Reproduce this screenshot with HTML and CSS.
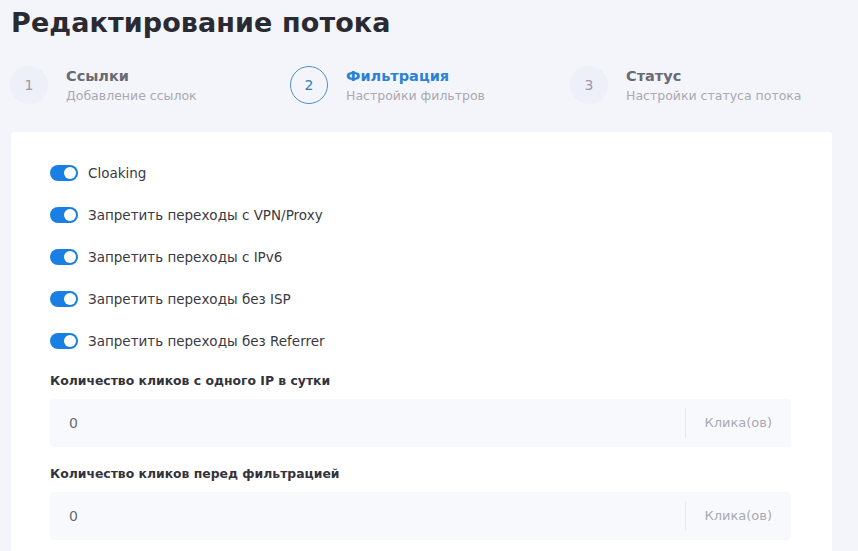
FILE: index.html
```html
<!DOCTYPE html>
<html lang="ru">
<head>
  <meta charset="UTF-8">
  <meta name="viewport" content="width=device-width, initial-scale=1.0">
  <title>Редактирование потока</title>
  <link rel="stylesheet" href="styles.css">
</head>
<body>
  <div class="page">
    <h1 class="page-title">Редактирование потока</h1>

    <div class="steps">
      <div class="step">
        <div class="step-num">1</div>
        <div class="step-text">
          <div class="step-title">Ссылки</div>
          <div class="step-sub">Добавление ссылок</div>
        </div>
      </div>
      <div class="step active">
        <div class="step-num">2</div>
        <div class="step-text">
          <div class="step-title">Фильтрация</div>
          <div class="step-sub">Настройки фильтров</div>
        </div>
      </div>
      <div class="step">
        <div class="step-num">3</div>
        <div class="step-text">
          <div class="step-title">Статус</div>
          <div class="step-sub">Настройки статуса потока</div>
        </div>
      </div>
    </div>

    <div class="card">
      <div class="switches">
        <label class="switch-row"><span class="switch on"></span>Cloaking</label>
        <label class="switch-row"><span class="switch on"></span>Запретить переходы с VPN/Proxy</label>
        <label class="switch-row"><span class="switch on"></span>Запретить переходы с IPv6</label>
        <label class="switch-row"><span class="switch on"></span>Запретить переходы без ISP</label>
        <label class="switch-row"><span class="switch on"></span>Запретить переходы без Referrer</label>
      </div>

      <div class="field">
        <div class="field-label">Количество кликов с одного IP в сутки</div>
        <div class="input-group">
          <input type="text" class="input" value="0">
          <span class="input-addon">Клика(ов)</span>
        </div>
      </div>

      <div class="field">
        <div class="field-label">Количество кликов перед фильтрацией</div>
        <div class="input-group">
          <input type="text" class="input" value="0">
          <span class="input-addon">Клика(ов)</span>
        </div>
      </div>
    </div>
  </div>
</body>
</html>
```

FILE: styles.css
```css
:root {
  --primary: #1a7fe3;
  --bg: #f4f5fa;
  --text: #2c2c36;
  --muted: #a3a3ad;
  --input-bg: #f8f9fc;
}

body {
  margin: 0;
  font-family: 'DejaVu Sans', 'Noto Sans', sans-serif;
  background-color: var(--bg);
  color: var(--text);
  overflow: hidden;
}

.page {
  padding: 6px 26px 0 11px;
  height: 551px;
  box-sizing: border-box;
  display: flex;
  flex-direction: column;
}

.page-title {
  margin: 0;
  font-size: 27px;
  font-weight: bold;
  letter-spacing: 0.1px;
  color: #2a2a33;
  line-height: 34px;
}

.steps {
  display: flex;
  margin-top: 25px;
  height: 67px;
  flex-shrink: 0;
}

.step {
  display: flex;
  align-items: center;
  width: 280px;
  height: 40px;
  flex-shrink: 0;
}

.step-num {
  width: 38px;
  height: 38px;
  border-radius: 50%;
  background-color: #edf0f8;
  color: #9a9aa4;
  font-size: 14px;
  display: flex;
  align-items: center;
  justify-content: center;
  margin-left: -1px;
  flex-shrink: 0;
}

.step-text {
  margin-left: 18px;
}

.step-title {
  font-size: 14.5px;
  font-weight: bold;
  color: #6a6a72;
  line-height: 20px;
}

.step-sub {
  font-size: 12.5px;
  color: #a9a9b1;
  line-height: 18px;
  margin-top: 1px;
}

.step.active .step-num {
  background-color: transparent;
  border: 1px solid #4d8fc9;
  color: #3a7cb8;
  box-sizing: border-box;
}

.step.active .step-title {
  color: #2a82d6;
}

.card {
  flex: 1;
  overflow: hidden;
  background-color: #fff;
  border-radius: 3px 3px 0 0;
  padding: 32px 41px 0 39px;
}

.switches {
  display: flex;
  flex-direction: column;
  gap: 24px;
}

.switch-row {
  display: flex;
  align-items: center;
  font-size: 13.5px;
  color: #3a3a42;
  line-height: 18px;
}

.switch {
  width: 28px;
  height: 16px;
  border-radius: 8px;
  background-color: #cfd3dc;
  position: relative;
  margin-right: 10px;
  flex-shrink: 0;
}

.switch::after {
  content: "";
  position: absolute;
  top: 2px;
  left: 2px;
  width: 12px;
  height: 12px;
  border-radius: 50%;
  background-color: #fff;
}

.switch.on {
  background-color: var(--primary);
}

.switch.on::after {
  left: 14px;
}

.field {
  margin-top: 22px;
}

.field + .field {
  margin-top: 18px;
}

.field-label {
  font-size: 12.4px;
  font-weight: bold;
  color: #33333b;
  line-height: 18px;
  margin-bottom: 9px;
}

.input-group {
  display: flex;
  align-items: center;
  background-color: var(--input-bg);
  border-radius: 4px;
  height: 48px;
}

.input {
  flex: 1;
  border: none;
  background: transparent;
  font-family: inherit;
  font-size: 14px;
  color: #6a6a72;
  padding: 0 19px;
  height: 100%;
  outline: none;
}

.input-addon {
  border-left: 1px solid #e6e8ee;
  height: 30px;
  line-height: 30px;
  padding: 0 19px 0 18px;
  font-size: 13px;
  color: #a9a9b1;
}
```
